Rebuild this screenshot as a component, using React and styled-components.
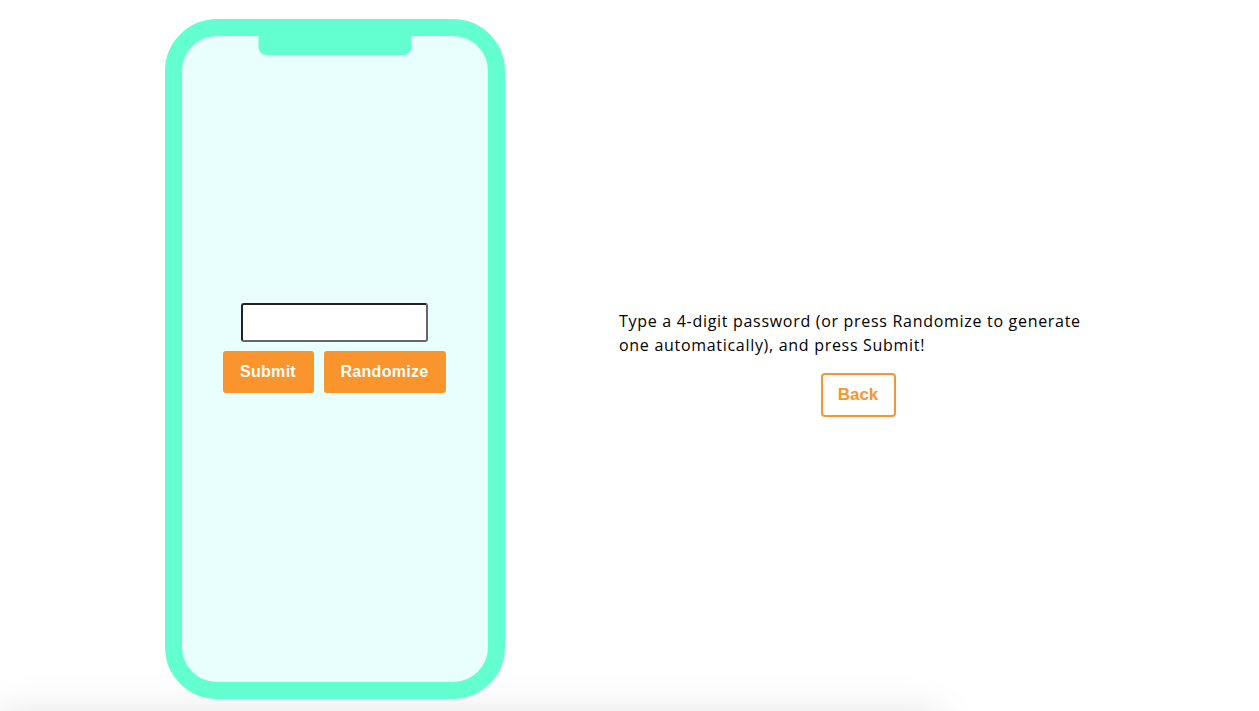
import React from "react";
import styled, { createGlobalStyle } from "styled-components";

const Global = createGlobalStyle`
  html, body { margin: 0; padding: 0; background: #ffffff; overflow: hidden; }
  body { font-family: "Liberation Sans", Arial, sans-serif; }
`;

const Page = styled.div`
  width: 1259px;
  height: 711px;
  display: flex;
  flex-direction: column;
  overflow: hidden;
`;

const Row = styled.div`
  display: flex;
  align-items: center;
  padding: 19px 0 12px 165px;
  gap: 114px;
  flex: none;
`;

const Phone = styled.div`
  position: relative;
  box-sizing: border-box;
  width: 340px;
  height: 680px;
  border: 17px solid #64ffd0;
  border-radius: 52px;
  background: #e8fffd;
  display: flex;
  flex-direction: column;
  align-items: center;
  padding-top: 267px;
  padding-right: 2px;
`;

const Notch = styled.div`
  position: absolute;
  top: -1px;
  left: 50%;
  transform: translateX(-50%);
  width: 153px;
  height: 20px;
  background: #64ffd0;
  border-radius: 0 0 8px 8px;
`;

const Field = styled.input`
  box-sizing: border-box;
  width: 187px;
  height: 39px;
  border: 2px solid #222;
  border-bottom-color: #666;
  border-right-color: #666;
  border-radius: 3px;
  background: #fff;
  outline: none;
`;

const Buttons = styled.div`
  display: flex;
  gap: 10px;
  margin-top: 9px;
`;

const OrangeButton = styled.button`
  box-sizing: border-box;
  height: 42px;
  width: ${p => p.$w}px;
  border: none;
  border-radius: 3px;
  background: #f9952c;
  color: #fff;
  font-family: "Liberation Sans", Arial, sans-serif;
  font-weight: 700;
  font-size: 16px;
  letter-spacing: 0.3px;
  padding: 0;
`;

const Info = styled.div`
  width: 478px;
  display: flex;
  flex-direction: column;
  align-items: center;
  margin-top: 8px;
`;

const Text = styled.p`
  margin: 0;
  align-self: stretch;
  font-family: "Open Sans", "Liberation Sans", sans-serif;
  font-size: 16px;
  letter-spacing: 0.7px;
  line-height: 24px;
  color: #000;
`;

const BackButton = styled.button`
  box-sizing: border-box;
  margin-top: 16px;
  width: 75px;
  height: 44px;
  border: 2px solid #f9952c;
  border-radius: 4px;
  background: #fff;
  color: #f9952c;
  font-family: "Liberation Sans", Arial, sans-serif;
  font-weight: 700;
  font-size: 17px;
  padding: 0;
`;

const Footer = styled.div`
  flex: none;
  width: 940px;
  height: 60px;
  box-shadow: 0 0 40px rgba(0, 0, 0, 0.1);
  background: #fff;
`;

export default function App() {
  return (
    <>
      <Global />
      <Page>
        <Row>
          <Phone>
            <Notch />
            <Field type="text" />
            <Buttons>
              <OrangeButton $w={91}>Submit</OrangeButton>
              <OrangeButton $w={122}>Randomize</OrangeButton>
            </Buttons>
          </Phone>
          <Info>
            <Text>
              Type a 4-digit password (or press Randomize to generate one
              automatically), and press Submit!
            </Text>
            <BackButton>Back</BackButton>
          </Info>
        </Row>
        <Footer />
      </Page>
    </>
  );
}
